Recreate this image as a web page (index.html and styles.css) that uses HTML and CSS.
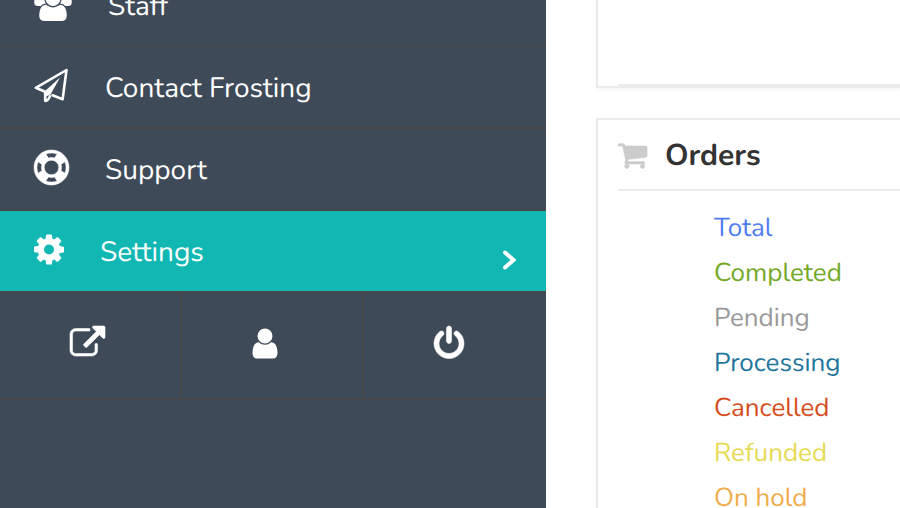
FILE: index.html
```html
<!DOCTYPE html>
<html lang="en">
<head>
<meta charset="utf-8">
<meta name="viewport" content="width=device-width, initial-scale=1">
<title>Dashboard</title>
<link rel="stylesheet" href="styles.css">
</head>
<body>
<div class="shell">
  <aside class="sidebar">
    <nav class="menu">
      <a class="menu-item" href="#staff">
        <svg class="icon icon-wide" viewBox="0 0 1920 1792" aria-hidden="true"><path d="M593 896q-162 5-265 128h-134q-82 0-138-40.500t-56-118.500q0-353 124-353 6 0 43.500 21t97.500 42.500 119 21.500q67 0 133-23-5 37-5 66 0 139 81 256zm1071 637q0 120-73 189.500t-194 69.500h-874q-121 0-194-69.500t-73-189.500q0-53 3.500-103.500t14-109 26.500-108.500 43-97.500 62-81 85.500-53.500 111.500-20q10 0 43 21.500t73 48 107 48 135 21.500 135-21.500 107-48 73-48 43-21.500q61 0 111.500 20t85.500 53.500 62 81 43 97.500 26.500 108.500 14 109 3.500 103.500zm-1024-1277q0 106-75 181t-181 75-181-75-75-181 75-181 181-75 181 75 75 181zm704 384q0 159-112.500 271.500t-271.500 112.500-271.500-112.500-112.500-271.500 112.500-271.500 271.500-112.500 271.500 112.500 112.500 271.500zm576 225q0 78-56 118.500t-138 40.500h-134q-103-123-265-128 81-117 81-256 0-29-5-66 66 23 133 23 59 0 119-21.500t97.500-42.500 43.500-21q124 0 124 353zm-128-609q0 106-75 181t-181 75-181-75-75-181 75-181 181-75 181 75 75 181z"/></svg>
        <span>Staff</span>
      </a>
      <a class="menu-item" href="#contact">
        <svg class="icon" viewBox="0 0 35 35" aria-hidden="true"><g fill="none" stroke="currentColor" stroke-width="2.600" stroke-linejoin="round" stroke-linecap="round"><path d="M10.500 23.500L1.800 19.800L32.500 2L28.600 31.300L18.500 27.300"/><path d="M11.200 25V32.800Q13.500 33.500 16 28.300"/></g><path d="M26 9.500L10 24L11 29L16.500 26.500Z"/></svg>
        <span>Contact Frosting</span>
      </a>
      <a class="menu-item" href="#support">
        <svg class="icon icon-bold" viewBox="0 0 1792 1792" aria-hidden="true"><path fill-rule="evenodd" d="M896 0a896 896 0 1 1 0 1792a896 896 0 1 1 0-1792zM896 150q-150 0-290 60l130 200q80-24 160-24t160 24l130-200q-140-60-290-60zM210 1186l200-130q-24-80-24-160t24-160l-200-130q-60 140-60 290t60 290zM896 1642q150 0 290-60l-130-200q-80 24-160 24t-160-24l-130 200q140 60 290 60zM896 1270a374 374 0 1 0 0-748a374 374 0 1 0 0 748zM1382 1056l200 130q60-140 60-290t-60-290l-200 130q24 80 24 160t-24 160z"/></svg>
        <span>Support</span>
      </a>
      <a class="menu-item active" href="#settings" aria-current="page">
        <svg class="icon icon-narrow" viewBox="128 0 1536 1792" aria-hidden="true"><path d="M1152 896q0-106-75-181t-181-75-181 75-75 181 75 181 181 75 181-75 75-181zm512-109v222q0 12-8 23t-20 13l-185 28q-19 54-39 91 35 50 107 138 10 12 10 25t-9 23q-27 37-99 108t-94 71q-12 0-26-9l-138-108q-44 23-91 38-16 136-29 186-7 28-36 28h-222q-14 0-24.500-8.500t-11.500-21.500l-28-184q-49-16-90-37l-141 107q-10 9-25 9-14 0-25-11-126-114-165-168-7-10-7-23 0-12 8-23 15-21 51-66.500t54-70.500q-27-50-41-99l-183-27q-13-2-21-12.500t-8-23.500v-222q0-12 8-23t19-13l186-28q14-46 39-92-40-57-107-138-10-12-10-24 0-10 9-23 26-36 98.500-107.500t94.500-71.500q13 0 26 10l138 107q44-23 91-38 16-136 29-186 7-28 36-28h222q14 0 24.500 8.500t11.500 21.500l28 184q49 16 90 37l142-107q9-9 24-9 13 0 25 10 129 119 165 170 7 8 7 22 0 12-8 23-15 21-51 66.500t-54 70.500q26 50 41 98l183 28q13 2 21 12.500t8 23.500z"/></svg>
        <span>Settings</span>
        <svg class="chevron" viewBox="0 0 14 20" aria-hidden="true"><path d="M3 2.500L11.500 10L3 17.500"/></svg>
      </a>
    </nav>
    <div class="shortcuts">
      <a class="shortcut" href="#site" aria-label="Open site">
        <svg class="icon icon-bold" viewBox="0 0 1792 1792" aria-hidden="true"><path d="M1408 928v320q0 119-84.500 203.500t-203.500 84.500h-832q-119 0-203.500-84.500t-84.500-203.500v-832q0-119 84.500-203.500t203.500-84.500h704q14 0 23 9t9 23v64q0 14-9 23t-23 9h-704q-66 0-113 47t-47 113v832q0 66 47 113t113 47h832q66 0 113-47t47-113v-320q0-14 9-23t23-9h64q14 0 23 9t9 23zm384-864v512q0 26-19 45t-45 19-45-19l-176-176-652 652q-10 10-23 10t-23-10l-114-114q-10-10-10-23t10-23l652-652-176-176q-19-19-19-45t19-45 45-19h512q26 0 45 19t19 45z"/></svg>
      </a>
      <a class="shortcut" href="#profile" aria-label="Profile">
        <svg class="icon icon-slim" viewBox="256 0 1280 1792" aria-hidden="true"><path d="M1536 1399q0 109-62.500 187t-150.500 78h-854q-88 0-150.500-78t-62.500-187q0-85 8.500-160.500t31.500-152 58.500-131 94-89 134.500-34.500q131 128 313 128t313-128q76 0 134.500 34.500t94 89 58.500 131 31.500 152 8.500 160.500zm-256-887q0 159-112.500 271.500t-271.500 112.500-271.500-112.500-112.500-271.500 112.500-271.500 271.500-112.500 271.500 112.500 112.500 271.500z"/></svg>
      </a>
      <a class="shortcut" href="#logout" aria-label="Log out">
        <svg class="icon icon-narrow icon-bold" viewBox="128 0 1536 1792" aria-hidden="true"><path d="M1664 896q0 156-61 298t-164 245-245 164-298 61-298-61-245-164-164-245-61-298q0-182 80.500-343t226.500-270q43-32 95.500-25t83.500 50q32 42 24.500 94.500t-49.500 84.500q-98 74-151.500 181t-53.500 228q0 104 40.500 198.500t109.500 163.500 163.500 109.500 198.500 40.500 198.500-40.500 163.500-109.500 109.500-163.500 40.500-198.500q0-121-53.500-228t-151.500-181q-42-32-49.500-84.500t24.500-94.500q31-43 84-50t95 25q146 109 226.500 270t80.500 343zm-640-768v640q0 52-38 90t-90 38-90-38-38-90v-640q0-52 38-90t90-38 90 38 38 90z"/></svg>
      </a>
    </div>
  </aside>
  <main class="content">
    <section class="card card-previous"><hr class="rule"></section>
    <section class="card">
      <h2 class="card-title">
        <svg class="cart" viewBox="64 0 1664 1792" aria-hidden="true"><path d="M704 1536q0 52-38 90t-90 38-90-38-38-90 38-90 90-38 90 38 38 90zm896 0q0 52-38 90t-90 38-90-38-38-90 38-90 90-38 90 38 38 90zm128-1088v512q0 24-16.500 42.500t-40.500 21.500l-1044 122q13 60 13 70 0 16-24 64h920q26 0 45 19t19 45-19 45-45 19h-1024q-26 0-45-19t-19-45q0-11 8-31.500t16-36 21.500-40 15.500-29.500l-177-823h-204q-26 0-45-19t-19-45 19-45 45-19h256q16 0 28.500 6.500t19.500 15.500 13 24.500 8 26 5.500 29.500 4.500 26h1201q26 0 45 19t19 45z"/></svg>
        <span>Orders</span>
      </h2>
      <ul class="statuses">
        <li><a class="total" href="#total">Total</a></li>
        <li><a class="completed" href="#completed">Completed</a></li>
        <li><a class="pending" href="#pending">Pending</a></li>
        <li><a class="processing" href="#processing">Processing</a></li>
        <li><a class="cancelled" href="#cancelled">Cancelled</a></li>
        <li><a class="refunded" href="#refunded">Refunded</a></li>
        <li><a class="on-hold" href="#on-hold">On hold</a></li>
      </ul>
    </section>
  </main>
</div>
</body>
</html>
```
FILE: styles.css
```css
* {
  box-sizing: border-box;
}

body {
  margin: 0;
  background: #fff;
  color: #333;
  font-family: Nunito, Lato, sans-serif;
  text-rendering: geometricPrecision;
  overflow: hidden;
}

a {
  color: inherit;
  text-decoration: none;
}

.shell {
  display: flex;
  height: 100vh;
}

.sidebar {
  flex: 0 0 546px;
  background: #3f4a58;
  color: #fff;
  overflow: hidden;
}

/* The menu is scrolled part-way past its first visible entry. */
.menu {
  margin-top: -35px;
}

.menu-item {
  display: flex;
  align-items: center;
  gap: 36px;
  height: 82px;
  padding: 2px 30px 0 34px;
  border-bottom: 2px solid #47474a;
  font-size: 28px;
  line-height: 36px;
}

.menu-item.active {
  background: #11b8b3;
}

.icon {
  display: block;
  flex: none;
  width: 35px;
  height: 35px;
  fill: currentColor;
  overflow: visible;
}

.icon-bold {
  stroke: currentColor;
  stroke-width: 30;
}

.menu-item .icon {
  margin-bottom: 5px;
}

.icon-wide {
  width: 38px;
}

.icon-narrow {
  width: 30px;
}

.icon-slim {
  width: 26px;
}

.chevron {
  width: 14px;
  height: 20px;
  margin: 16px 0 0 auto;
  fill: none;
  stroke: currentColor;
  stroke-width: 4;
  stroke-linecap: round;
}

.shortcuts {
  display: grid;
  grid-template-columns: repeat(3, 1fr);
  border-bottom: 2px solid #47474a;
}

.shortcut {
  padding: 33px 0 37px 70px;
  border-right: 2px solid #47474a;
}

.shortcut:last-child {
  border-right: 0;
}

.content {
  flex: 1;
  min-width: 0;
  padding-left: 50px;
  overflow: hidden;
}

.card {
  padding-left: 20px;
  border: 2px solid #ebebeb;
  border-right: 0;
  box-shadow: 0 2px 3px rgba(0, 0, 0, 0.04);
}

.card-previous {
  margin-bottom: 30px;
  padding-top: 84px;
  border-top: 0;
}

.rule {
  margin: 0;
  border: 0;
  border-top: 2px solid #ebebeb;
}

.card-title {
  display: flex;
  align-items: center;
  gap: 18px;
  height: 71px;
  margin: 0;
  padding-top: 2px;
  border-bottom: 2px solid #ebebeb;
  font-size: 30px;
  line-height: 40px;
}

.cart {
  width: 29px;
  height: 32px;
  margin-bottom: 2px;
  fill: #ccc;
  stroke: #ccc;
  stroke-width: 40;
  overflow: visible;
}

.statuses {
  margin: 0;
  padding: 15px 0 14px 96px;
  list-style: none;
  font-size: 26px;
  line-height: 45px;
}

.total { color: #4f7df0; }
.completed { color: #74a928; }
.pending { color: #999; }
.processing { color: #21759b; }
.cancelled { color: #d54e21; }
.refunded { color: #e6db55; }
.on-hold { color: #f0ad4e; }
```
